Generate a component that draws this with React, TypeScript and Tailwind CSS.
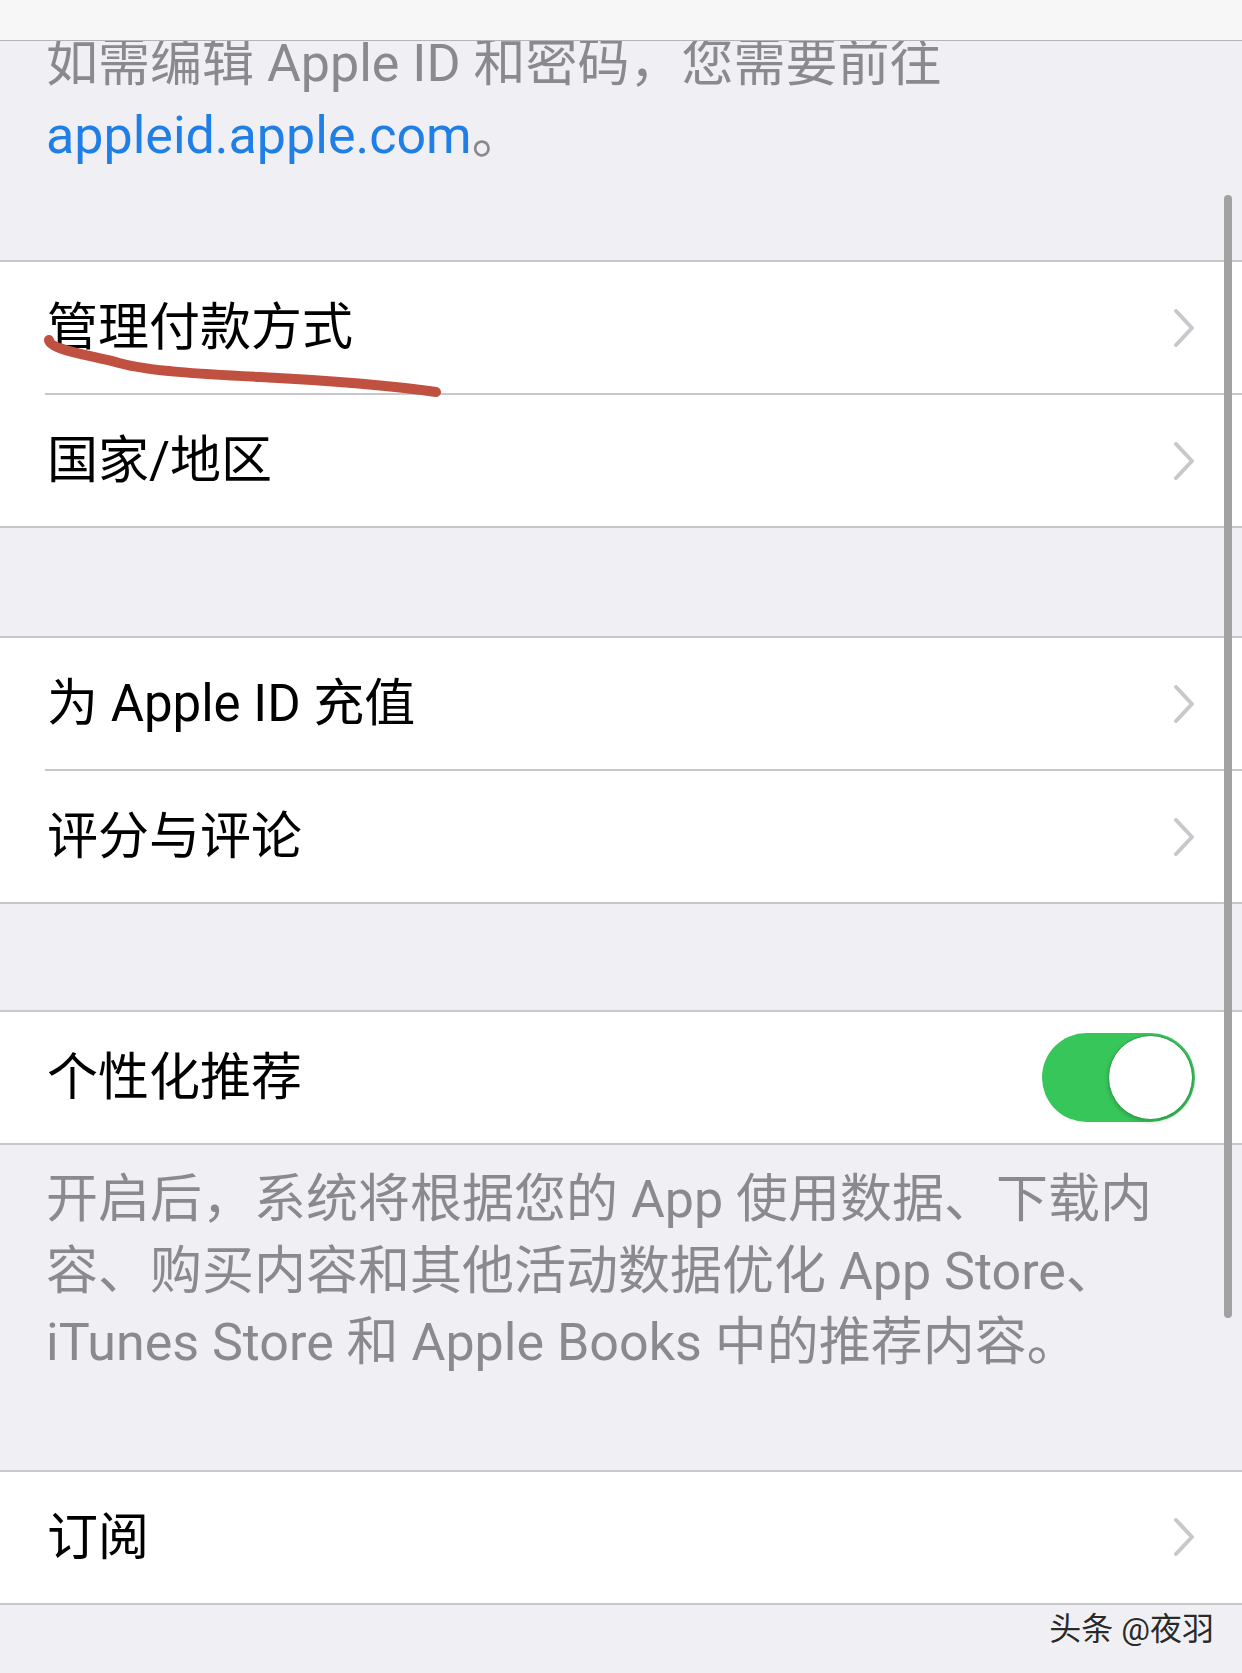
import React from "react";

const font = "font-['Roboto','Noto_Sans_CJK_SC',sans-serif]";

function Chevron() {
  return (
    <svg width="22" height="40" viewBox="0 0 22 40" fill="none">
      <polyline
        points="3,3 19,20 3,37"
        stroke="#c7c7cc"
        strokeWidth="4"
        strokeLinecap="round"
        strokeLinejoin="round"
      />
    </svg>
  );
}

function Toggle() {
  return (
    <div className="flex h-[89px] w-[153px] items-center justify-end rounded-full bg-[#37c65a] p-[2px]">
      <div className="h-[85px] w-[85px] rounded-full border border-[#2f9a4a] bg-white shadow-[0_2px_4px_rgba(0,0,0,0.2)]" />
    </div>
  );
}

function Row({ title, toggle }: { title: string; toggle?: boolean }) {
  return (
    <div className="flex h-[131px] items-center justify-between bg-white pl-[47px] pr-[47px]">
      <span className="text-[51px] leading-none text-black">{title}</span>
      {toggle ? <Toggle /> : <Chevron />}
    </div>
  );
}

function Group({ rows, className = "" }: { rows: { title: string; toggle?: boolean }[]; className?: string }) {
  return (
    <div className={`border-y-2 border-[#c8c7cc] bg-white ${className}`}>
      {rows.map((r, i) => (
        <div key={r.title}>
          {i > 0 && <div className="ml-[45px] h-[2px] bg-[#c8c7cc]" />}
          <Row title={r.title} toggle={r.toggle} />
        </div>
      ))}
    </div>
  );
}

export default function App() {
  return (
    <div className={`relative h-[1673px] w-[1242px] overflow-hidden bg-[#efeff4] ${font}`}>
      <div className="relative z-10 h-[41px] border-b border-[#b5b5b8] bg-[#f7f7f8]" />

      <div className="-mt-[13px] pb-[89px] pl-[46px] text-[52px] leading-[71.5px] text-[#8a8a8e]">
        如需编辑 Apple ID 和密码，您需要前往
        <br />
        <span className="text-[#1f7fe6]">appleid.apple.com</span>。
      </div>

      <Group rows={[{ title: "管理付款方式" }, { title: "国家/地区" }]} />
      <Group className="mt-[108px]" rows={[{ title: "为 Apple ID 充值" }, { title: "评分与评论" }]} />
      <Group className="mt-[106px]" rows={[{ title: "个性化推荐", toggle: true }]} />

      <div className="pb-[91px] pl-[46px] pt-[19px] text-[52px] leading-[71.5px] whitespace-nowrap text-[#8a8a8e]">
        开启后，系统将根据您的 App 使用数据、下载内
        <br />
        容、购买内容和其他活动数据优化 App Store、
        <br />
        iTunes Store 和 Apple Books 中的推荐内容。
      </div>

      <Group rows={[{ title: "订阅" }]} />

      <div className="mt-[4px] pr-[28px] text-right text-[32px] leading-[40px] text-[#2a2a2a] [text-shadow:0_0_2px_#ffffff]">
        头条 @夜羽
      </div>

      {/* scroll indicator */}
      <div className="absolute left-[1224px] top-[195px] h-[1123px] w-[8px] rounded-full bg-[#a2a2a2]" />

      {/* hand-drawn underline */}
      <svg className="absolute left-0 top-0" width="500" height="420" viewBox="0 0 500 420" fill="none">
        <path
          d="M49,340 C50,350 90,355 119,363 S200,374 260,377 S380,384 436,392"
          stroke="#c0503f"
          strokeWidth="10"
          strokeLinecap="round"
        />
      </svg>
    </div>
  );
}
